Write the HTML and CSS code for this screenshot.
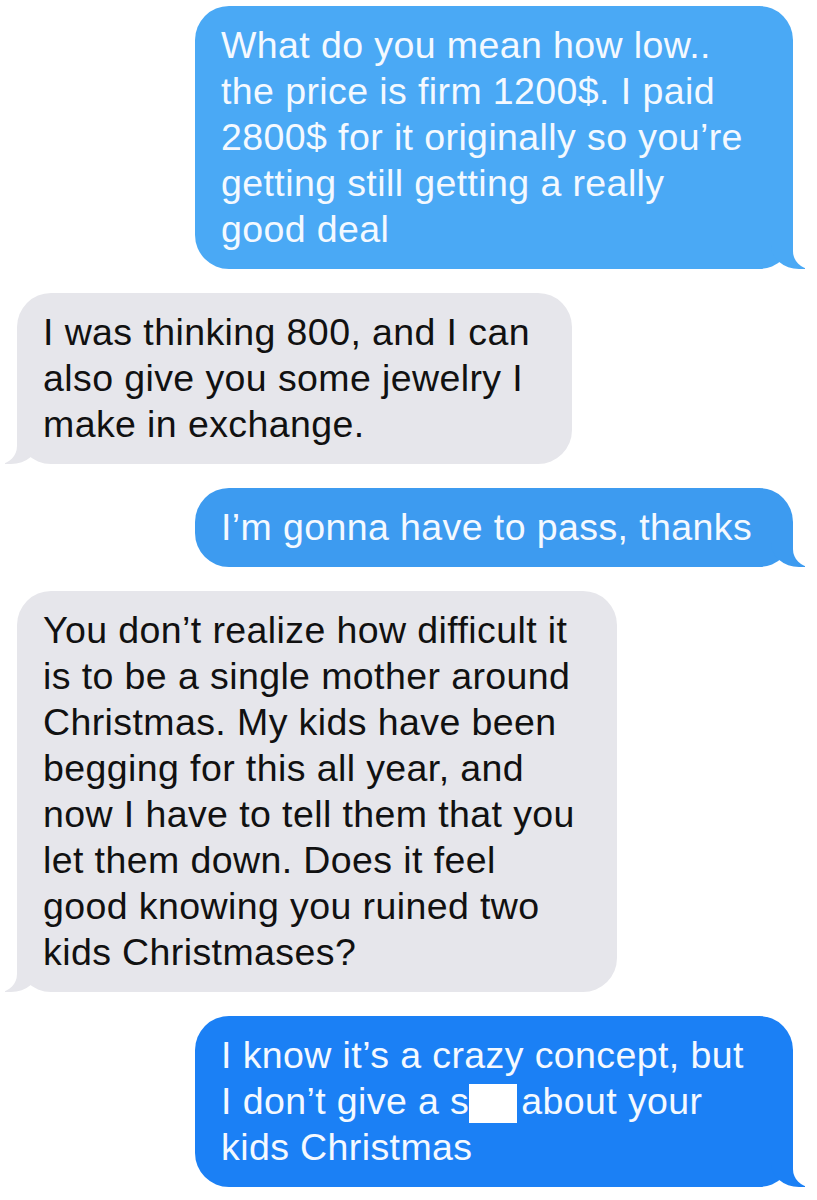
FILE: index.html
```html
<!DOCTYPE html>
<html lang="en">
<head>
    <meta charset="UTF-8">
    <meta name="viewport" content="width=device-width, initial-scale=1.0">
    <title>Messages</title>
    <link rel="stylesheet" href="styles.css">
</head>
<body>
    <div class="thread">
        <!-- sent -->
        <div class="bubble me me-light w-wide">
            What do you mean how low..<br>
            the price is firm 1200$. I paid<br>
            2800$ for it originally so you’re<br>
            getting still getting a really<br>
            good deal
        </div>

        <!-- received -->
        <div class="bubble them w-jewelry">
            I was thinking 800, and I can<br>
            also give you some jewelry I<br>
            make in exchange.
        </div>

        <div class="bubble me me-mid w-wide">
            I’m gonna have to pass, thanks
        </div>

        <div class="bubble them w-long">
            You don’t realize how difficult it<br>
            is to be a single mother around<br>
            Christmas. My kids have been<br>
            begging for this all year, and<br>
            now I have to tell them that you<br>
            let them down. Does it feel<br>
            good knowing you ruined two<br>
            kids Christmases?
        </div>

        <div class="bubble me me-dark w-wide">
            I know it’s a crazy concept, but<br>
            I don’t give a s<span class="redact"></span>about your<br>
            kids Christmas
        </div>
    </div>
</body>
</html>
```

FILE: styles.css
```css
body {
    margin: 0;
    background-color: #ffffff;
    font-family: "Liberation Sans", Arial, sans-serif;
}
.thread {
    display: flex;
    flex-direction: column;
    gap: 24px;
    padding: 6px 24px 20px 17px;
}
.bubble {
    position: relative;
    box-sizing: border-box;
    padding: 16px 20px 17px 26px;
    border-radius: 34px;
    font-size: 37.5px;
    letter-spacing: 0.4px;
    line-height: 46px;
    white-space: nowrap;
}

/* sent messages, tail on the right */
.me {
    align-self: flex-end;
    color: #f4f9ff;
}
.me-light { background-color: #4aa9f5; }
.me-mid { background-color: #3d9bf0; }
.me-dark { background-color: #1b80f5; }

.me::before,
.me::after,
.them::before,
.them::after {
    content: "";
    position: absolute;
    bottom: 0;
}
.me::before {
    right: -12px;
    width: 0;
    height: 36px;
    border-right: 34px solid;
    border-bottom-left-radius: 28px 24px;
}
.me-light::before { border-right-color: #4aa9f5; }
.me-mid::before { border-right-color: #3d9bf0; }
.me-dark::before { border-right-color: #1b80f5; }
.me::after {
    right: -22px;
    width: 22px;
    height: 38px;
    background: #ffffff;
    border-bottom-left-radius: 18px;
}

/* received messages, tail on the left */
.them {
    align-self: flex-start;
    background-color: #e6e6eb;
    color: #111111;
}
.them::before {
    left: -12px;
    width: 0;
    height: 36px;
    border-left: 34px solid #e6e6eb;
    border-bottom-right-radius: 28px 24px;
}
.them::after {
    left: -22px;
    width: 22px;
    height: 38px;
    background: #ffffff;
    border-bottom-right-radius: 18px;
}

.w-wide { width: 598px; }
.w-jewelry { width: 555px; }
.w-long { width: 600px; }

.redact {
    display: inline-block;
    width: 48px;
    height: 39px;
    margin-right: 4px;
    background: #ffffff;
    vertical-align: -9px;
}
```
